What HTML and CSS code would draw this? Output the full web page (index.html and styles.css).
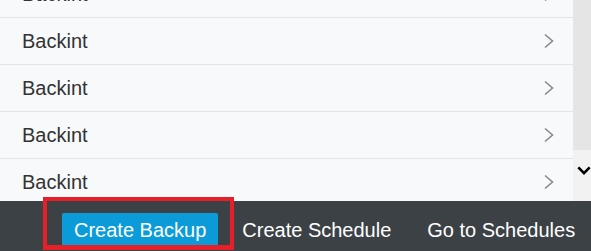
FILE: index.html
```html
<!DOCTYPE html>
<html lang="en">
<head>
    <meta charset="UTF-8">
    <meta name="viewport" content="width=device-width, initial-scale=1.0">
    <title>Backups</title>
    <link rel="stylesheet" href="styles.css">
</head>
<body>
    <div class="page">
        <div class="content">
            <div class="list">
                <div class="rows">
                    <div class="row"><span>Backint</span><svg class="chevron" width="12" height="16" viewBox="0 0 12 16"><polyline points="2,1.5 9.5,8 2,14.5"/></svg></div>
                    <div class="row"><span>Backint</span><svg class="chevron" width="12" height="16" viewBox="0 0 12 16"><polyline points="2,1.5 9.5,8 2,14.5"/></svg></div>
                    <div class="row"><span>Backint</span><svg class="chevron" width="12" height="16" viewBox="0 0 12 16"><polyline points="2,1.5 9.5,8 2,14.5"/></svg></div>
                    <div class="row"><span>Backint</span><svg class="chevron" width="12" height="16" viewBox="0 0 12 16"><polyline points="2,1.5 9.5,8 2,14.5"/></svg></div>
                    <div class="row"><span>Backint</span><svg class="chevron" width="12" height="16" viewBox="0 0 12 16"><polyline points="2,1.5 9.5,8 2,14.5"/></svg></div>
                </div>
            </div>
            <div class="scrollbar">
                <div class="thumb"></div>
                <div class="track">
                    <svg class="down" width="16" height="11" viewBox="0 0 16 11"><polyline points="1.5,2 8,8.5 14.5,2"/></svg>
                </div>
            </div>
        </div>
        <div class="footer">
            <div class="highlight-wrap">
                <button class="btn primary">Create Backup</button>
                <div class="highlight"></div>
            </div>
            <button class="btn">Create Schedule</button>
            <button class="btn">Go to Schedules</button>
        </div>
    </div>
</body>
</html>
```

FILE: styles.css
```css
* {
    box-sizing: border-box;
}
body {
    font-family: Arial, "Liberation Sans", sans-serif;
    margin: 0;
    padding: 0;
    background-color: #f8f9fa;
}
.page {
    display: flex;
    flex-direction: column;
    height: 251px;
    overflow: hidden;
}
.content {
    display: flex;
    height: 201px;
    flex-shrink: 0;
    overflow: hidden;
}
.list {
    flex: 1;
    overflow: hidden;
    background-color: #f8f9fa;
}
.rows {
    margin-top: -29px;
}
.row {
    height: 47px;
    border-bottom: 1px solid #e3e4e6;
    display: flex;
    align-items: center;
    justify-content: space-between;
    padding: 0 18px 0 22px;
    font-size: 20px;
    color: #333;
}
.chevron polyline {
    fill: none;
    stroke: #8a8a8a;
    stroke-width: 1.6;
}
.scrollbar {
    width: 18px;
    display: flex;
    flex-direction: column;
    background-color: #f2f2f2;
}
.thumb {
    height: 150px;
    background-color: #e5e5e5;
}
.track {
    flex: 1;
    display: flex;
    justify-content: center;
    padding-top: 15px;
    padding-left: 4px;
}
.down polyline {
    fill: none;
    stroke: #000;
    stroke-width: 3;
}
.footer {
    height: 50px;
    flex-shrink: 0;
    background-color: #3c4145;
    display: flex;
    align-items: flex-start;
    padding: 12px 0 0 50px;
    gap: 12px;
}
.highlight-wrap {
    position: relative;
    display: flex;
    padding-left: 12px;
}
.highlight {
    position: absolute;
    top: -16px;
    left: -7px;
    right: -16px;
    bottom: -3px;
    border: 4px solid #e61f28;
    border-bottom-width: 5px;
}
.btn {
    font-family: Arial, "Liberation Sans", sans-serif;
    font-size: 20px;
    color: #fff;
    background: none;
    border: none;
    height: 34px;
    padding: 0 12px;
    white-space: nowrap;
    flex-shrink: 0;
}
.primary {
    background-color: #0b9bd9;
    border-radius: 2px;
}
```
